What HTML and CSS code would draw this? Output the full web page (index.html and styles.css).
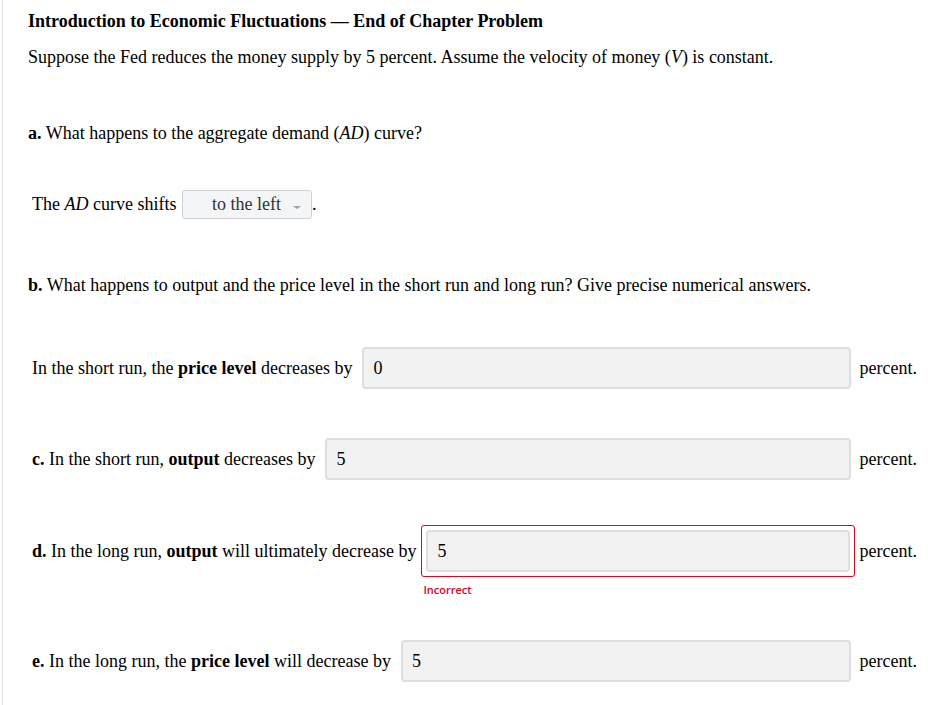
FILE: index.html
```html
<!DOCTYPE html>
<html lang="en">
<head>
<meta charset="utf-8">
<title>Introduction to Economic Fluctuations</title>
<link rel="stylesheet" href="styles.css">
</head>
<body>
<div class="page">
  <h1 class="title">Introduction to Economic Fluctuations — End of Chapter Problem</h1>
  <p class="intro">Suppose the Fed reduces the money supply by 5 percent. Assume the velocity of money (<i>V</i>) is constant.</p>

  <p class="question q-a"><b>a.</b> What happens to the aggregate demand (<i>AD</i>) curve?</p>

  <div class="select-row">The <i>AD</i> curve shifts <span class="select"><span class="select-text">to the left</span><span class="caret"></span></span>.</div>

  <p class="question q-b"><b>b.</b> What happens to output and the price level in the short run and long run? Give precise numerical answers.</p>

  <div class="answer-row row-1">
    <span class="label">In the short run, the <b>price level</b> decreases by</span>
    <input class="field" type="text" value="0" readonly>
    <span class="unit">percent.</span>
  </div>

  <div class="answer-row row-c">
    <span class="label"><b>c.</b> In the short run, <b>output</b> decreases by</span>
    <input class="field" type="text" value="5" readonly>
    <span class="unit">percent.</span>
  </div>

  <div class="answer-row row-d">
    <span class="label"><b>d.</b> In the long run, <b>output</b> will ultimately decrease by</span>
    <span class="error-box"><input class="field" type="text" value="5" readonly></span>
    <span class="unit">percent.</span>
    <span class="error-msg">Incorrect</span>
  </div>

  <div class="answer-row row-e">
    <span class="label"><b>e.</b> In the long run, the <b>price level</b> will decrease by</span>
    <input class="field" type="text" value="5" readonly>
    <span class="unit">percent.</span>
  </div>
</div>
</body>
</html>
```

FILE: styles.css
```css
html, body {
  margin: 0;
  padding: 0;
  background: #ffffff;
}

body {
  font-family: "Liberation Serif", "Times New Roman", serif;
  font-size: 18px;
  color: #000;
}

.page {
  margin-left: 2px;
  border-left: 1px solid #e2e2e2;
  padding: 11px 18px 40px 25px;
  min-height: 705px;
  box-sizing: border-box;
}

.title {
  margin: 0;
  font-size: 18px;
  font-weight: bold;
  line-height: 20px;
}

.intro {
  margin: 16px 0 0;
  line-height: 20px;
}

.question {
  margin: 0;
  line-height: 20px;
}

.q-a { margin-top: 56px; }
.q-b { margin-top: 56px; }

.select-row {
  margin: 47px 0 0 4px;
  display: flex;
  align-items: center;
  white-space: pre;
}

.select {
  display: inline-flex;
  align-items: center;
  box-sizing: border-box;
  width: 130px;
  height: 29px;
  margin-left: 1px;
  border: 1px solid #cfd2d6;
  border-radius: 3px;
  background: #f4f5f7;
  padding-left: 29px;
  color: #333;
}

.select-text {
  flex: 1;
}

.caret {
  width: 0;
  height: 0;
  margin: 6px 10px 0 0;
  border-left: 4px solid transparent;
  border-right: 4px solid transparent;
  border-top: 3px solid #a0a0a0;
}

.answer-row {
  display: grid;
  grid-template-columns: auto 1fr auto;
  align-items: center;
  column-gap: 9px;
  margin: 0 4px 0 4px;
}

.row-1 { margin-top: 52px; }
.row-c { margin-top: 49px; }
.row-d { margin-top: 45px; }
.row-e { margin-top: 43px; }

.label {
  white-space: nowrap;
  margin-right: 1px;
}

.unit {
  white-space: nowrap;
}

.field {
  display: block;
  width: 100%;
  min-width: 0;
  box-sizing: border-box;
  height: 42px;
  margin: 0;
  padding: 0 9px;
  border: 2px solid #dedede;
  border-radius: 4px;
  background: #f2f2f2;
  font-family: "Liberation Serif", "Times New Roman", serif;
  font-size: 18px;
  color: #000;
  outline: none;
}

.error-box {
  display: block;
  margin: 0 -4px 0 -5px;
  padding: 4px;
  border: 1px solid #e3001b;
  border-radius: 3px;
}

.error-msg {
  grid-column: 2;
  grid-row: 2;
  margin: 6px 0 0 -3px;
  font-family: "Open Sans", "Liberation Sans", sans-serif;
  font-size: 11px;
  font-weight: 600;
  line-height: 14px;
  color: #e3001b;
}
```
